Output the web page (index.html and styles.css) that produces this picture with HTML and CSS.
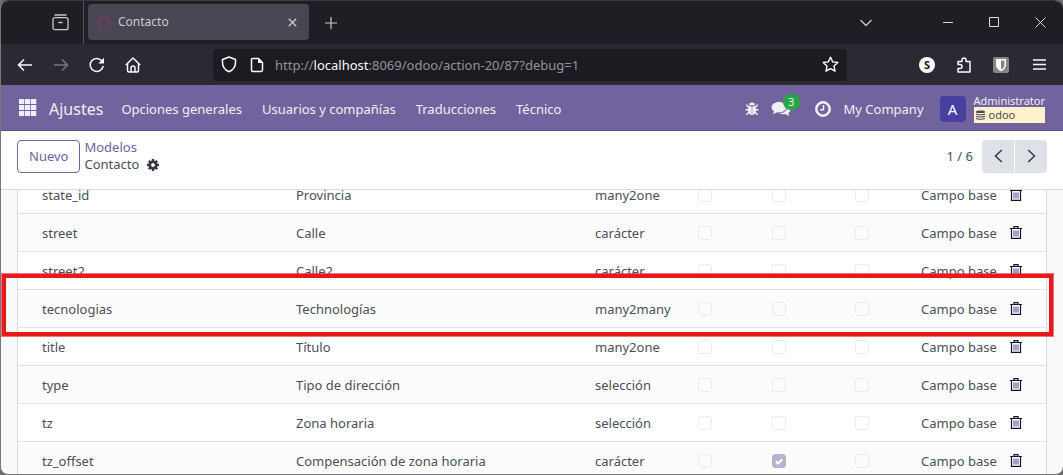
FILE: index.html
```html
<!DOCTYPE html>
<html lang="es">
<head>
<meta charset="utf-8">
<title>Contacto</title>
<link rel="stylesheet" href="styles.css">
</head>
<body>
<svg class="defs" aria-hidden="true">
  <symbol id="trash" viewBox="0 0 12 13"><path d="M2 3h8v9.500H2z" fill="#fff" stroke="none"/><path d="M0 2.500h12M4 2V.6h4V2M1.500 3v9.400h9V3" fill="none" stroke="#111130" stroke-width="1.200"/><path d="M4 4.500V10.500M6 4.500V10.500M8 4.500V10.500" stroke="#17176b" stroke-width=".8"/></symbol>
</svg>
<div class="window">
  <header class="tabstrip">
    <button class="plain archive" aria-label="Vista"><svg width="17" height="17" viewBox="0 0 17 17" fill="none" stroke="#c9c9ce" stroke-width="1.3"><path d="M2.5 1h12"/><rect x="1" y="3.7" width="15" height="12" rx="2"/><path d="M6.5 8.5h4"/></svg></button>
    <div class="tab">
      <span class="ring"></span><span class="tab-title">Contacto</span>
      <button class="plain" aria-label="Cerrar pestaña"><svg width="9" height="9" viewBox="0 0 9 9" stroke="#c9c9ce" stroke-width="1.3"><path d="M.8.8l7.4 7.4M8.2.8L.8 8.2"/></svg></button>
    </div>
    <button class="plain newtab" aria-label="Nueva pestaña"><svg width="12" height="12" viewBox="0 0 12 12" stroke="#c9c9ce" stroke-width="1.2"><path d="M6 0v12M0 6h12"/></svg></button>
    <div class="wincontrols">
      <button class="plain tablist" aria-label="Lista de pestañas"><svg width="12" height="8" viewBox="0 0 12 8" fill="none" stroke="#c9c9ce" stroke-width="1.3"><path d="M.5 1l5.500 5.500L11.500 1"/></svg></button>
      <button class="plain" aria-label="Minimizar"><svg width="11" height="11" viewBox="0 0 11 11" stroke="#dedee0"><path d="M0 5.500h10"/></svg></button>
      <button class="plain" aria-label="Maximizar"><svg width="11" height="11" viewBox="0 0 11 11" fill="none" stroke="#dedee0"><path d="M.5.5h9v9h-9z"/></svg></button>
      <button class="plain" aria-label="Cerrar"><svg width="11" height="11" viewBox="0 0 11 11" stroke="#dedee0"><path d="M.5.5l10 10M10.500.5l-10 10"/></svg></button>
    </div>
  </header>
  <div class="toolbar">
    <div class="nav-buttons">
      <button class="plain" aria-label="Atrás"><svg width="16" height="16" viewBox="0 0 16 16" fill="none" stroke="#fbfbfe" stroke-width="1.5"><path d="M15 8H1.500M7 2.500L1.500 8 7 13.500"/></svg></button>
      <button class="plain" aria-label="Adelante"><svg width="16" height="16" viewBox="0 0 16 16" fill="none" stroke="#77767e" stroke-width="1.5"><path d="M1 8h13.500M9 2.500L14.500 8 9 13.500"/></svg></button>
      <button class="plain" aria-label="Recargar"><svg width="16" height="16" viewBox="0 0 16 16" fill="none" stroke="#fbfbfe" stroke-width="1.5"><path d="M12.800 3.800A6.500 6.500 0 1 0 14.200 8.800"/><path d="M15 .8v5.700H9.300z" fill="#fbfbfe" stroke="none"/></svg></button>
      <button class="plain" aria-label="Inicio"><svg width="16" height="16" viewBox="0 0 16 16" fill="none" stroke="#fbfbfe" stroke-width="1.5" stroke-linejoin="round"><path d="M.8 8L8 1l7.200 7M2.500 6.500v7a1.500 1.500 0 0 0 1.500 1.500h8a1.500 1.500 0 0 0 1.500-1.500v-7"/><path d="M6 15v-4a2 2 0 0 1 4 0v4"/></svg></button>
    </div>
    <div class="urlbar">
      <svg width="16" height="17" viewBox="0 0 16 17" fill="none" stroke="#fbfbfe" stroke-width="1.5" stroke-linejoin="round"><path d="M8 1l6.500 2.500v3c0 4-2.500 7.500-6.500 9.300C4 14 1.500 10.500 1.500 6.500v-3z"/></svg>
      <svg class="page" width="14" height="16" viewBox="0 0 14 16" fill="none" stroke="#fbfbfe" stroke-width="1.5" stroke-linejoin="round"><path d="M2.500 1.500h6L12.500 5.500V13a1.500 1.500 0 0 1-1.500 1.500H3A1.500 1.500 0 0 1 1.500 13V2.500a1 1 0 0 1 1-1z"/><path d="M8 1v5h5z" fill="#fbfbfe" stroke="none"/></svg>
      <div class="url">http://<b>localhost</b>:8069/odoo/action-20/87?debug=1</div>
      <button class="plain" aria-label="Marcador"><svg width="17" height="17" viewBox="0 0 17 17" fill="none" stroke="#fbfbfe" stroke-width="1.4" stroke-linejoin="round"><path d="M8.500 1.200l2.200 4.700 5.100.6-3.800 3.500 1 5.200-4.500-2.500L4 15.200l1-5.200L1.200 6.500l5.100-.6z"/></svg></button>
    </div>
    <div class="extensions">
      <button class="plain s-ext" aria-label="Extensión S">S</button>
      <button class="plain" aria-label="Extensiones"><svg width="16" height="16" viewBox="0 0 16 16" fill="none" stroke="#fbfbfe" stroke-width="1.5" stroke-linejoin="round"><path d="M2 7.500V4.500h4V3a2 2 0 0 1 4 0v1.500h4v10.500H2v-3.500h2a2 2 0 0 0 0-4z"/></svg></button>
      <button class="plain" aria-label="Bitwarden"><svg width="16" height="16" viewBox="0 0 16 16"><rect width="16" height="16" rx="2" fill="#85858a"/><path d="M3 2h10v6c0 3-2.500 5-5 6.200C5.500 13 3 11 3 8z" fill="#fff"/><path d="M8 3.600h3.500V8c0 2-1.700 3.500-3.500 4.500z" fill="#85858a"/></svg></button>
      <button class="plain menu-button" aria-label="Menú"><svg width="13" height="11" viewBox="0 0 13 11" stroke="#fbfbfe" stroke-width="1.300"><path d="M0 1h13M0 5.500h13M0 10h13"/></svg></button>
    </div>
  </div>
  <nav class="appbar">
    <button class="plain apps" aria-label="Aplicaciones"><svg width="18" height="17" viewBox="0 0 18 17" fill="#f1eff6"><path d="M0 0h5.300v5H0zM6 0h5.300v5H6zM12 0h5.300v5H12zM0 6h5.300v5H0zM6 6h5.300v5H6zM12 6h5.300v5H12zM0 12h5.300v5H0zM6 12h5.300v5H6zM12 12h5.300v5H12z"/></svg></button>
    <a class="brand" href="#">Ajustes</a>
    <div class="menu"><a href="#">Opciones generales</a><a href="#">Usuarios y compañías</a><a href="#">Traducciones</a><a href="#">Técnico</a></div>
    <div class="systray">
      <button class="plain" aria-label="Depuración"><svg width="14" height="14" viewBox="0 0 14 14"><path d="M4.200 3.200a2.800 2.800 0 0 1 5.600 0zM3 4.200h3.700v9C4 12.700 3 11 3 8zM7.300 4.200H11V8c0 3-1 4.700-3.700 5.200z" fill="#f1eff6"/><path d="M.5 7.800h3M10.500 7.800h3M1.300 2.800l2.700 2.700M12.700 2.800L10 5.500M1.300 12.700l2.700-2.700M12.700 12.700L10 10" stroke="#f1eff6" stroke-width="1.400"/></svg></button>
      <button class="plain chat" aria-label="Conversaciones"><svg width="20" height="16" viewBox="0 0 20 16" fill="#f1eff6"><path d="M8 1c4 0 7.200 2.300 7.200 5.300S12 11.500 8 11.500c-.8 0-1.500 0-2.200-.2-1.200 1-2.500 1.600-4.300 1.700.8-.9 1.400-1.600 1.500-2.700C1.500 9.300.6 8 .6 6.300.6 3.300 4 1 8 1z"/><path d="M16.300 5c1.900.8 3.100 2.100 3.100 3.800 0 1.400-.8 2.500-2.100 3.300.1 1 .6 1.800 1.400 2.700-1.700-.1-3-.7-4.200-1.700-2.500.5-4.500 0-5.900-.8 4.500-.2 8-2.500 7.700-7.300z"/></svg><span class="badge">3</span></button>
      <button class="plain clock" aria-label="Actividades"><svg width="16" height="16" viewBox="0 0 16 16" fill="none" stroke="#f1eff6"><circle cx="8" cy="8" r="6.700" stroke-width="2.500"/><path d="M8.500 4v4.700H5" stroke-width="1.500"/></svg></button>
      <a class="company" href="#">My Company</a>
      <button class="plain user"><span class="avatar">A</span><span class="who"><span>Administrator</span><span class="db"><svg width="9" height="10" viewBox="0 0 9 10" fill="#495057"><path d="M0 1.500C0 .2 9 .2 9 1.500v.7C9 3.400 0 3.400 0 2.200zM0 3.500c2 1 7 1 9 0v1c-2 1.200-7 1.200-9 0zM0 5.700c2 1 7 1 9 0v1c-2 1.200-7 1.200-9 0zM0 7.900c2 1 7 1 9 0v.9c-1 1.400-8 1.400-9 0z"/></svg>odoo</span></span></button>
    </div>
  </nav>
  <div class="control">
    <button class="nuevo">Nuevo</button>
    <div class="crumbs"><a href="#">Modelos</a><div class="current">Contacto <button class="plain" aria-label="Acciones"><svg width="12" height="12" viewBox="-6 -6 12 12"><circle r="3.200" fill="none" stroke="#343a40" stroke-width="2.600"/><path d="M0-6v3M0 3v3M-6 0h3M3 0h3M-4.200-4.200l2 2M2.200 2.200l2 2M-4.200 4.200l2-2M2.200-2.200l2-2" stroke="#343a40" stroke-width="2.400"/></svg></button></div></div>
    <div class="pager"><span>1 / 6</span><div class="pager-buttons"><button aria-label="Anterior"><svg width="9" height="14" viewBox="0 0 9 14" fill="none" stroke="#374151" stroke-width="1.600"><path d="M7.800 1L1.500 7l6.300 6"/></svg></button><button aria-label="Siguiente"><svg width="9" height="14" viewBox="0 0 9 14" fill="none" stroke="#374151" stroke-width="1.600"><path d="M1.200 1l6.300 6-6.300 6"/></svg></button></div></div>
  </div>
  <main class="content">
    <table class="fields">
      <colgroup><col class="c-name"><col class="c-label"><col class="c-type"><col class="c-req"><col class="c-ro"><col class="c-idx"><col class="c-kind"><col class="c-del"></colgroup>
      <tbody>
      <tr><td>state_id</td><td>Provincia</td><td>many2one</td><td><input type="checkbox" disabled aria-label="Requerido"></td><td><input type="checkbox" disabled aria-label="Solo lectura"></td><td><input type="checkbox" disabled aria-label="Indexado"></td><td>Campo base</td><td><button class="plain" aria-label="Eliminar"><svg width="12" height="13"><use href="#trash"/></svg></button></td></tr>
      <tr><td>street</td><td>Calle</td><td>carácter</td><td><input type="checkbox" disabled aria-label="Requerido"></td><td><input type="checkbox" disabled aria-label="Solo lectura"></td><td><input type="checkbox" disabled aria-label="Indexado"></td><td>Campo base</td><td><button class="plain" aria-label="Eliminar"><svg width="12" height="13"><use href="#trash"/></svg></button></td></tr>
      <tr><td>street2</td><td>Calle2</td><td>carácter</td><td><input type="checkbox" disabled aria-label="Requerido"></td><td><input type="checkbox" disabled aria-label="Solo lectura"></td><td><input type="checkbox" disabled aria-label="Indexado"></td><td>Campo base</td><td><button class="plain" aria-label="Eliminar"><svg width="12" height="13"><use href="#trash"/></svg></button></td></tr>
      <tr><td>tecnologias</td><td>Technologías</td><td>many2many</td><td><input type="checkbox" disabled aria-label="Requerido"></td><td><input type="checkbox" disabled aria-label="Solo lectura"></td><td><input type="checkbox" disabled aria-label="Indexado"></td><td>Campo base</td><td><button class="plain" aria-label="Eliminar"><svg width="12" height="13"><use href="#trash"/></svg></button></td></tr>
      <tr><td>title</td><td>Título</td><td>many2one</td><td><input type="checkbox" disabled aria-label="Requerido"></td><td><input type="checkbox" disabled aria-label="Solo lectura"></td><td><input type="checkbox" disabled aria-label="Indexado"></td><td>Campo base</td><td><button class="plain" aria-label="Eliminar"><svg width="12" height="13"><use href="#trash"/></svg></button></td></tr>
      <tr><td>type</td><td>Tipo de dirección</td><td>selección</td><td><input type="checkbox" disabled aria-label="Requerido"></td><td><input type="checkbox" disabled aria-label="Solo lectura"></td><td><input type="checkbox" disabled aria-label="Indexado"></td><td>Campo base</td><td><button class="plain" aria-label="Eliminar"><svg width="12" height="13"><use href="#trash"/></svg></button></td></tr>
      <tr><td>tz</td><td>Zona horaria</td><td>selección</td><td><input type="checkbox" disabled aria-label="Requerido"></td><td><input type="checkbox" disabled aria-label="Solo lectura"></td><td><input type="checkbox" disabled aria-label="Indexado"></td><td>Campo base</td><td><button class="plain" aria-label="Eliminar"><svg width="12" height="13"><use href="#trash"/></svg></button></td></tr>
      <tr><td>tz_offset</td><td>Compensación de zona horaria</td><td>carácter</td><td><input type="checkbox" disabled aria-label="Requerido"></td><td><span class="ticked"><input type="checkbox" checked disabled aria-label="Solo lectura"><svg width="8" height="7" viewBox="0 0 8 7" fill="none" stroke="#fff" stroke-width="2"><path d="M.8 3.300L3 5.500 7.200 1.200"/></svg></span></td><td><input type="checkbox" disabled aria-label="Indexado"></td><td>Campo base</td><td><button class="plain" aria-label="Eliminar"><svg width="12" height="13"><use href="#trash"/></svg></button></td></tr>
      </tbody>
    </table>
    <div class="highlight"></div>
  </main>
</div>
</body>
</html>
```
FILE: styles.css
```css
* { box-sizing: border-box; }
body { margin: 0; background: #6c6c6e; color: #495057; font: 13px/20px "Noto Sans", "Open Sans", sans-serif; }
svg { display: block; flex: none; }
a { color: inherit; text-decoration: none; white-space: nowrap; }
.defs { position: absolute; width: 0; height: 0; }
.plain { display: flex; align-items: center; justify-content: center; border: 0; padding: 0; background: none; color: inherit; font: inherit; }
.window { display: flex; flex-direction: column; height: 100vh; border: 1px solid #77777a; border-top-color: #3b3b3f; border-right: 0; border-radius: 8px; overflow: hidden; background: #f8f9fa; }

.tabstrip { display: flex; align-items: stretch; height: 43px; flex: none; background: #1f1e25; color: #c9c9ce; }
.archive { width: 83px; padding-left: 37px; border-right: 1px solid #55545c; }
.tab { display: flex; align-items: center; width: 221px; margin: 3px 0 4px 4px; padding: 0 12px 0 9px; border-radius: 4px; background: #484652; font-size: 12px; }
.ring { width: 14px; height: 14px; border: 3px solid #63405a; border-radius: 50%; }
.tab-title { flex: 1; padding-left: 7px; }
.newtab { width: 43px; }
.wincontrols { display: flex; margin-left: auto; }
.wincontrols button { width: 46px; }
.wincontrols .tablist { margin-right: 36px; }

.toolbar { display: flex; align-items: center; height: 41px; flex: none; background: #2b2a32; }
.nav-buttons { display: flex; gap: 20px; width: 212px; flex: none; padding-left: 16px; }
.urlbar { display: flex; align-items: center; flex: 1; height: 32px; padding: 0 8px; border-radius: 4px; background: #1c1b22; }
.page { margin-left: 13px; }
.url { flex: 1; padding-left: 11px; color: #94939b; font-size: 13px; }
.url b { color: #fbfbfe; font-weight: 400; }
.extensions { display: flex; align-items: center; justify-content: flex-end; gap: 21px; width: 216px; flex: none; padding-right: 17px; }
.s-ext { width: 16px; height: 16px; border-radius: 50%; background: #fff; color: #1c1b22; font-size: 11px; font-weight: 700; }
.menu-button { margin-left: 3px; }

.appbar { display: flex; align-items: center; height: 46px; flex: none; padding: 2px 18px 0; border-bottom: 1px solid #5a4f80; background: #71639e; color: #f1eff6; }
.apps { padding-bottom: 2px; }
.brand { margin-left: 12px; font-size: 16px; }
.menu { display: flex; gap: 20px; margin-left: 18px; }
.systray { display: flex; align-items: center; margin-left: auto; }
.chat { position: relative; margin-left: 12px; }
.badge { position: absolute; top: -7px; left: 12px; width: 17px; height: 16px; border-radius: 8px; background: #28a745; font-size: 11px; line-height: 16px; }
.clock { margin-left: 24px; }
.company { margin-left: 13px; }
.user { margin-left: 16px; gap: 8px; }
.avatar { width: 26px; height: 26px; border-radius: 4px; background: #4740a0; color: #fff; font-size: 15px; line-height: 26px; }
.who { display: flex; flex-direction: column; text-align: left; font-size: 11px; line-height: 12px; }
.db { display: flex; align-items: center; gap: 4px; height: 16px; padding-left: 2px; background: #fff1cc; color: #495057; }

.control { display: flex; align-items: center; height: 59px; flex: none; padding: 0 16px 8px; border-bottom: 1px solid #d8dadd; background: #fff; }
.nuevo { height: 33px; padding: 0 11px; border: 1px solid #71639e; border-radius: 4px; background: #fff; color: #71639e; font: inherit; }
.crumbs { margin-left: 4px; line-height: 17px; }
.crumbs > a { display: block; color: #71639e; }
.current { display: flex; align-items: center; gap: 8px; }
.pager { display: flex; align-items: center; gap: 9px; margin-left: auto; }
.pager-buttons { display: flex; gap: 1px; border-radius: 4px; overflow: hidden; }
.pager-buttons button { display: flex; align-items: center; justify-content: center; width: 32px; height: 33px; border: 0; padding: 0; background: #dee2e6; }

.content { position: relative; flex: 1; min-height: 0; overflow: hidden; padding: 0 16px; }
.fields { width: 100%; margin-top: -14px; table-layout: fixed; border-collapse: separate; border-spacing: 0; border: solid #d8dadd; border-width: 0 1px; background: #fff; }
.fields td { height: 38px; padding: 0; border-bottom: 1px solid #dee2e6; white-space: nowrap; }
.fields td:first-child { padding-left: 24px; }
.fields tr:nth-child(even) { background: #fcfcfc; }
.c-name { width: 278px; }
.c-label { width: auto; }
.c-type { width: 103px; }
.c-req { width: 74px; }
.c-ro { width: 83px; }
.c-idx { width: 66px; }
.c-kind { width: 89px; }
.c-del { width: 36px; }
.fields input { appearance: none; display: block; width: 14px; height: 14px; margin: 0; border: 1px solid #ececee; border-radius: 3px; }
.fields input:checked { border-color: #b8b1cf; background: #b8b1cf; }
.ticked { display: block; position: relative; width: 14px; }
.ticked svg { position: absolute; top: 4px; left: 3px; }
.highlight { position: absolute; top: 84px; left: 1px; right: 10px; height: 62px; border: 4px solid #e51a1c; outline: 1px solid #e51a1c99; }
```
